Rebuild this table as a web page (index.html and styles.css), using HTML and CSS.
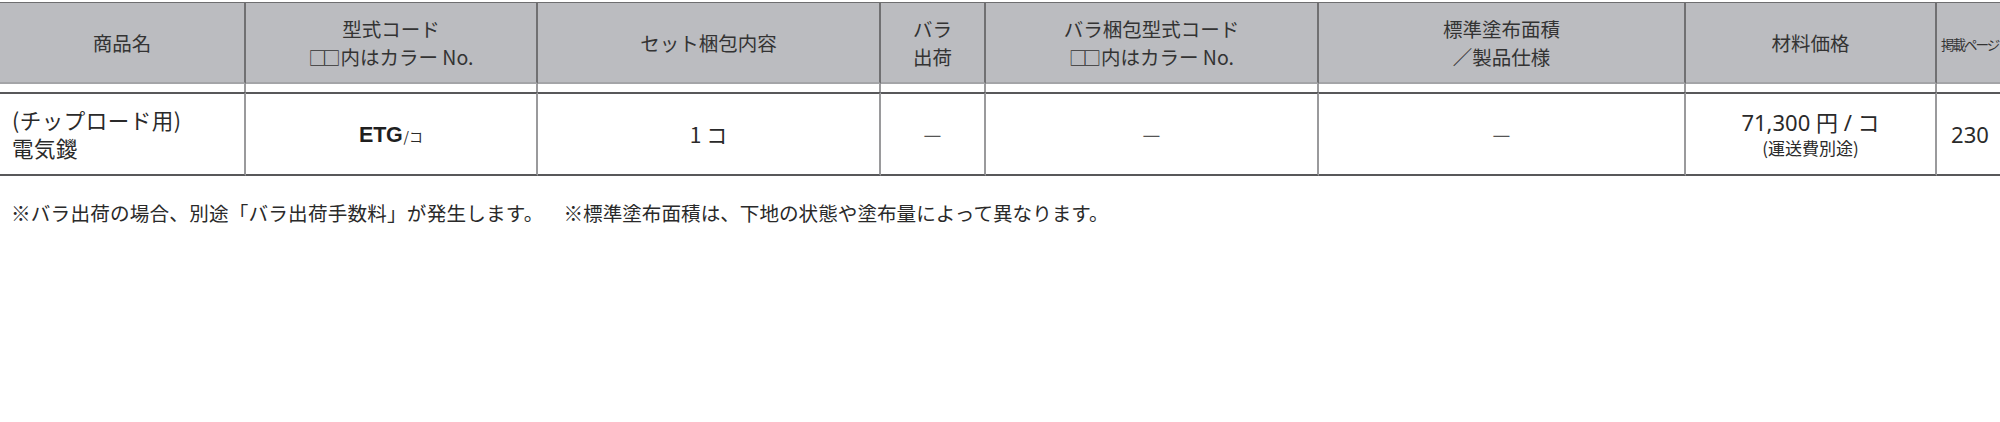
FILE: index.html
```html
<!DOCTYPE html>
<html lang="ja">
<head>
<meta charset="utf-8">
<title>商品表</title>
<link rel="stylesheet" href="styles.css">
</head>
<body>
<div class="page">
  <table class="spec">
    <colgroup>
      <col class="w1"><col class="w2"><col class="w3"><col class="w4"><col class="w5"><col class="w6"><col class="w7"><col class="w8">
    </colgroup>
    <thead>
      <tr class="head">
        <th>商品名</th>
        <th>型式コード<br><span class="box">□□</span>内はカラー No.</th>
        <th>セット梱包内容</th>
        <th>バラ<br>出荷</th>
        <th>バラ梱包型式コード<br><span class="box">□□</span>内はカラー No.</th>
        <th>標準塗布面積<br>／製品仕様</th>
        <th>材料価格</th>
        <th class="page-h"><span>掲載ページ</span></th>
      </tr>
    </thead>
    <tbody>
      <tr class="gap">
        <td></td><td></td><td></td><td></td><td></td><td></td><td></td><td></td>
      </tr>
      <tr class="row">
        <td class="name">(チップロード用)<br>電気鑁</td>
        <td class="code"><b>ETG</b><small>/コ</small></td>
        <td class="set">1 コ</td>
        <td class="dash">—</td>
        <td class="dash">—</td>
        <td class="dash">—</td>
        <td class="price"><span class="p-main">71,300 円 / コ</span><span class="p-sub">(運送費別途)</span></td>
        <td class="pg">230</td>
      </tr>
    </tbody>
  </table>
  <p class="note"><span class="note1">※バラ出荷の場合、別途「バラ出荷手数料」が発生します。</span><span class="note2">※標準塗布面積は、下地の状態や塗布量によって異なります。</span></p>
</div>
</body>
</html>
```

FILE: styles.css
```css
html, body {
  margin: 0;
  padding: 0;
  background: #ffffff;
}
body {
  width: 2000px;
  height: 422px;
  overflow: hidden;
  font-family: "Noto Sans CJK JP", "Noto Sans", sans-serif;
  color: #2b2b2b;
}
.page {
  padding-top: 2px;
}
.spec {
  table-layout: fixed;
  border-collapse: separate;
  border-spacing: 0;
  width: 2003px;
}
.w1 { width: 246px; }
.w2 { width: 292px; }
.w3 { width: 343px; }
.w4 { width: 105px; }
.w5 { width: 333px; }
.w6 { width: 367px; }
.w7 { width: 251px; }
.w8 { width: 66px; }

.head th {
  height: 79px;
  padding: 0;
  background: #bbbcc0;
  border-top: 1px solid #6e6e70;
  border-bottom: 2px solid #a4a5a8;
  border-right: 2px solid #707072;
  font-weight: normal;
  font-size: 19.5px;
  line-height: 28px;
  color: #333;
  text-align: center;
  vertical-align: middle;
}
.head th:last-child {
  border-right: none;
}
.box {
  letter-spacing: -4px;
  margin-right: 4px;
  font-size: 18px;
}
.head th.page-h {
  text-align: left;
  overflow: hidden;
  white-space: nowrap;
}
.page-h span {
  display: inline-block;
  font-size: 13.5px;
  letter-spacing: -2px;
  margin-left: 4px;
}
.gap td {
  height: 8px;
  padding: 0;
  border-right: 2px solid #9a9a9c;
}
.row td {
  height: 80px;
  padding: 0;
  border-top: 2px solid #58585a;
  border-bottom: 2px solid #58585a;
  border-right: 2px solid #9a9a9c;
  text-align: center;
  vertical-align: middle;
  font-size: 21px;
  line-height: 28px;
  color: #2a2a2a;
}
.gap td:last-child,
.row td:last-child {
  border-right: none;
}
.row td.name {
  text-align: left;
  padding-left: 12px;
  font-size: 21.5px;
  letter-spacing: 0.5px;
}
.code b {
  font-family: "Liberation Sans", Arial, sans-serif;
  font-weight: bold;
  font-size: 21.5px;
  letter-spacing: -0.3px;
  color: #1f1f1f;
}
.code small {
  font-size: 14px;
  margin-left: 1px;
}
.row td.dash {
  color: #555;
  font-size: 20px;
}
.price span {
  display: block;
}
.p-main {
  font-family: "Noto Sans", "Noto Sans CJK JP", sans-serif;
  font-size: 22px;
  line-height: 28px;
}
.p-sub {
  font-size: 17px;
  line-height: 24px;
}
.row td.pg {
  font-family: "Noto Sans", sans-serif;
  font-size: 22px;
}
.note {
  margin: 23px 0 0 11px;
  font-size: 19.6px;
  line-height: 28px;
  color: #2a2a2a;
  white-space: nowrap;
}
.note1 {
  letter-spacing: 0.2px;
}
.note2 {
  margin-left: 20px;
}
```
